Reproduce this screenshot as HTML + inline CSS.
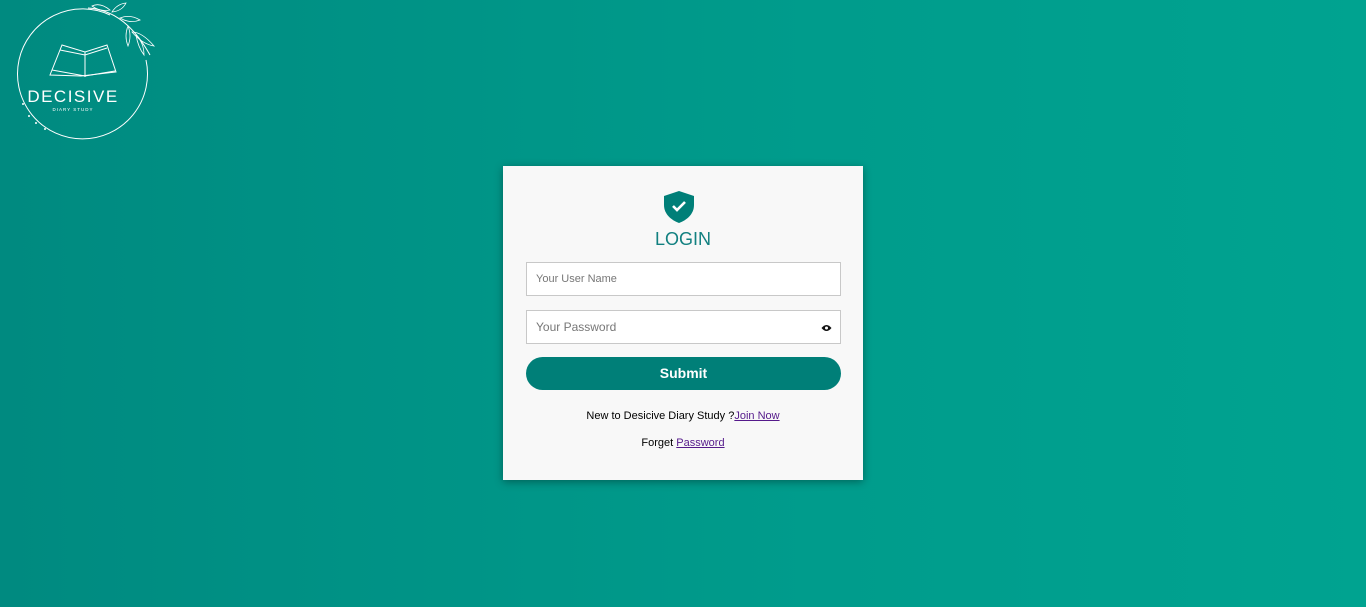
<!DOCTYPE html>
<html><head><meta charset="utf-8"><style>
*{box-sizing:border-box;margin:0;padding:0}
body{width:1366px;height:607px;overflow:hidden;background:linear-gradient(90deg,#008a80 0%,#009c8c 60%,#00a390 100%);font-family:"Liberation Sans",sans-serif;position:relative}
.card{position:absolute;left:503px;top:166px;width:360px;height:314px;background:#f8f8f8;box-shadow:0 2px 8px rgba(0,0,0,.35)}
.title{position:absolute;left:0;width:100%;text-align:center;color:#128080;font-size:18px}
.inp{position:absolute;left:23px;width:315px;height:34px;background:#fff;border:1px solid #c8c8c8;color:#777;padding-left:9px;line-height:32px}
.btn{position:absolute;left:23px;top:191px;width:315px;height:33px;border-radius:17px;background:#007f78;color:#fff;font-size:14px;font-weight:bold;text-align:center;line-height:33px}
.t{position:absolute;left:0;width:100%;text-align:center;font-size:11px;color:#000}
.t a{color:#551a8b;text-decoration:underline}
</style></head><body>
<svg style="position:absolute;left:0;top:0" width="170" height="150" viewBox="0 0 170 150">
<path d="M110 15 A65 65 0 1 0 146 60" fill="none" stroke="#fff" stroke-width="1"/>
<path d="M88 8 Q125 10 150 55" fill="none" stroke="#fff" stroke-width="1"/>
<g fill="none" stroke="#fff" stroke-width=".8">
<path d="M92 6q8-4 18 4q-10 2-18-4z"/><path d="M112 12q5-8 14-9q-4 8-14 9z"/><path d="M120 18q10-4 20 2q-10 4-20-2z"/><path d="M128 26q-4 10 0 20q4-10 0-20z"/><path d="M136 35q2 12 8 20q0-12-8-20z"/><path d="M132 32q10 0 22 14q-12-2-22-14z"/></g>
<g fill="none" stroke="#fff" stroke-width="1"><path d="M50 75l12-30 23 7 22-7 9 27-35 4z"/><path d="M60 50l25 5 22-7"/><path d="M85 52v25"/><path d="M52 70l33 6 30-5"/></g>
<text x="73" y="102" text-anchor="middle" fill="#fff" font-size="17" font-family="Liberation Sans" letter-spacing="1.5">DECISIVE</text>
<text x="73" y="111" text-anchor="middle" fill="#fff" font-size="4.5" letter-spacing="1">DIARY STUDY</text>
<g fill="#fff"><circle cx="23" cy="104" r="1"/><circle cx="29" cy="116" r="1"/><circle cx="36" cy="123" r="1"/><circle cx="45" cy="129" r="1"/></g>
</svg>
<div class="card">
<svg style="position:absolute;left:160px;top:24px" width="32" height="34" viewBox="0 0 32 34"><path d="M16 1L1 6v9c0 9 7 15 15 18 8-3 15-9 15-18V6z" fill="#007f78"/><path d="M10 16l4 4 8-8" fill="none" stroke="#fff" stroke-width="2.6"/></svg>
<div class="title" style="top:63px">LOGIN</div>
<div class="inp" style="top:96px;font-size:11px">Your User Name</div>
<div class="inp" style="top:144px;font-size:12px">Your Password
<svg style="position:absolute;right:8px;top:13px" width="11" height="8" viewBox="0 0 11 8"><path d="M0.5 4Q5.5-2 10.5 4Q5.5 10 0.5 4z" fill="#111"/><circle cx="5.5" cy="4" r="1.5" fill="#fff"/></svg></div>
<div class="btn">Submit</div>
<div class="t" style="top:244px">New to Desicive Diary Study ?<a>Join Now</a></div>
<div class="t" style="top:271px">Forget <a>Password</a></div>
</div>
</body></html>
